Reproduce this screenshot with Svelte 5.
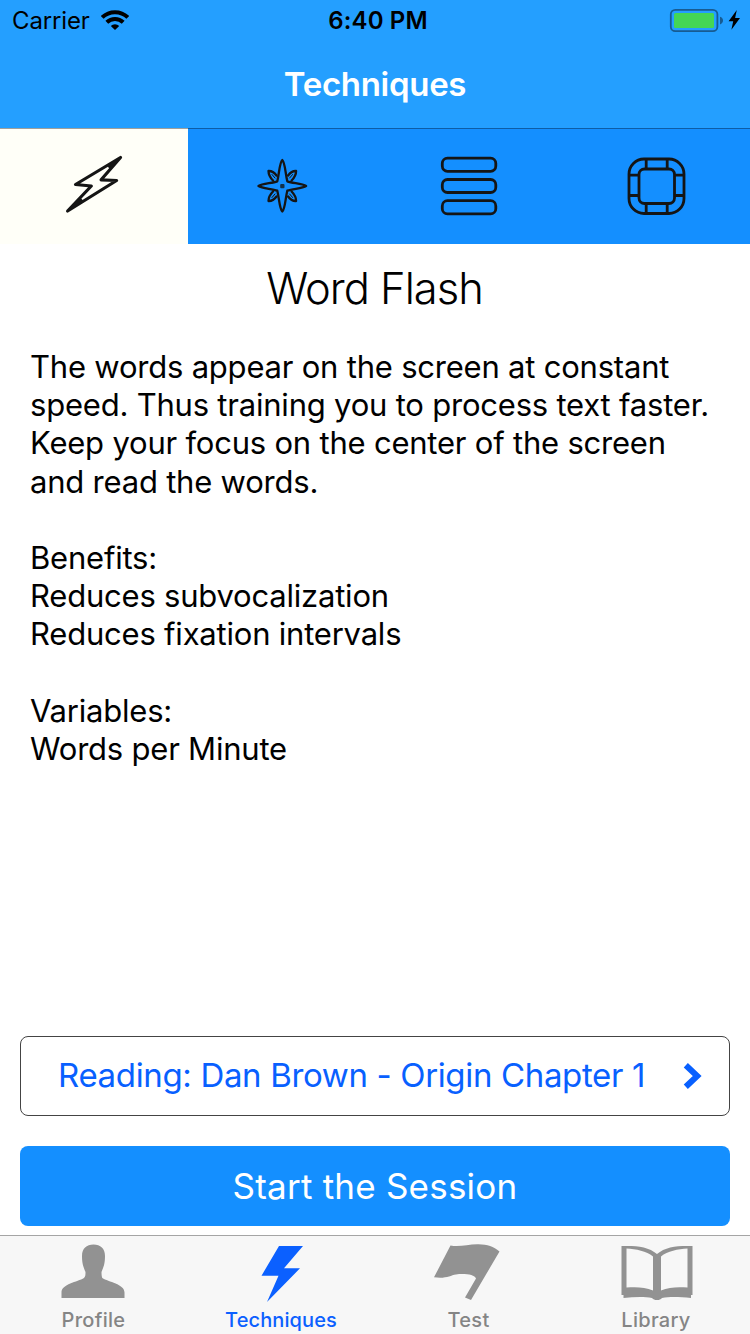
<script>
  const paragraphs = [
    [
      'The words appear on the screen at constant',
      'speed. Thus training you to process text faster.',
      'Keep your focus on the center of the screen',
      'and read the words.'
    ],
    ['Benefits:', 'Reduces subvocalization', 'Reduces fixation intervals'],
    ['Variables:', 'Words per Minute']
  ];
</script>

<div class="screen">
  <header>
    <div class="status">
      <div class="carrier">
        <span>Carrier</span>
        <svg width="28" height="20" viewBox="101 10 28 20">
          <g fill="none" stroke="#000" stroke-width="4">
            <path d="M102.2 17.4a18.3 18.3 0 0 1 25.6 0" />
            <path d="M106.8 22.2a11.8 11.8 0 0 1 16.4 0" />
          </g>
          <path d="M110.8 26a6 6 0 0 1 8.4 0L115 30z" />
        </svg>
      </div>
      <div class="clock">6:40 PM</div>
      <svg class="battery" width="72" height="26" viewBox="669 7 72 26">
        <rect x="670.8" y="9.8" width="46.6" height="21.4" rx="4.5" fill="none" stroke="#175b92" stroke-width="1.8" />
        <rect x="674" y="13" width="40" height="15" rx="1.5" fill="#44d655" />
        <path d="M720 16.8q3 1 3 3.8t-3 3.8z" fill="#175b92" />
        <path d="M736.8 10 728.600 21.300h4.600l-1.800 8.400 8.600-11.700h-4.900z" />
      </svg>
    </div>
    <h1>Techniques</h1>
  </header>

  <nav class="tabs">
    <button class="selected" aria-label="Word flash">
      <svg width="90" height="90" viewBox="49 140 90 90">
        <path d="M120.5 157.5 75.500 184.500l15.800 1.500-23.700 25 49-30.500-15.500-.7z" fill="none" stroke="#151515" stroke-width="3.200" stroke-linejoin="round" />
        <path d="M120.500 157.500 107 165l3 5zM67.600 211l12.500-13.500 3.500 3.500z" fill="#151515" />
      </svg>
    </button>
    <button aria-label="Focus star">
      <svg width="91" height="90" viewBox="236 140 91 90">
        <g fill="none" stroke="#151515" stroke-width="2.300" stroke-linejoin="round" stroke-linecap="round">
          <path d="M282.300 160c-2.800 2.500-3 13-5 21.300-5.500 2-15 2-18.800 4.700 3.800 2.500 13.300 2.700 18.800 4.700 2 8 2.200 18.300 5 20.800 2.800-2.500 3-12.800 5-20.800 5.500-2 15-2.200 18.800-4.700-3.800-2.700-13.300-2.700-18.800-4.700-2-8.300-2.200-18.800-5-21.300z" />
          <path d="M276.500 175.500q-3.500-4.800-8-4.500 0 5 4.500 9.500M288.100 175.500q3.500-4.800 8-4.500 0 5-4.500 9.500M276.500 196.500q-3.500 4.800-8 4.500 0-5 4.500-9.500M288.100 196.500q3.500 4.800 8 4.500 0-5-4.500-9.500" />
          <path d="M272 174.500l3 3.500M292.600 174.500l-3 3.500M272 197.500l3-3.500M292.600 197.500l-3-3.500" stroke-width="1" />
        </g>
        <rect x="280.200" y="183.900" width="4.300" height="4.300" rx="1" fill="#12304a" />
      </svg>
    </button>
    <button aria-label="Lines">
      <svg width="91" height="90" viewBox="423 140 91 90">
        <g fill="none" stroke="#151515" stroke-width="2.800">
          <rect x="442.300" y="158.100" width="53.500" height="13.200" rx="5.200" />
          <rect x="442.300" y="179.500" width="53.500" height="13" rx="5.200" />
          <rect x="442.300" y="200.700" width="53.500" height="13.200" rx="5.200" />
        </g>
      </svg>
    </button>
    <button aria-label="Frame">
      <svg width="90" height="90" viewBox="611 140 90 90">
        <g fill="none" stroke="#151515" stroke-width="2.800">
          <rect x="629" y="159" width="55" height="54.500" rx="15" />
          <rect x="639" y="169" width="35.500" height="34.500" rx="5.500" />
          <path d="M646.200 159v10M667.200 159v10M646.200 203.500v10M667.200 203.500v10M629 175.200h10M629 195.500h10M674.500 175.200H684M674.500 195.500H684" />
        </g>
      </svg>
    </button>
  </nav>

  <main>
    <h2>Word Flash</h2>
    <div class="description">
      {#each paragraphs as lines}
        <p>
          {#each lines as line}
            <span>{line}</span>
          {/each}
        </p>
      {/each}
    </div>
    <div class="actions">
      <button class="reading">
        <span>Reading: Dan Brown - Origin Chapter 1</span>
        <svg width="20" height="28" viewBox="683 1062 20 28">
          <path d="M685.800 1065.300 697.200 1076l-11.400 10.700" fill="none" stroke="#0860ff" stroke-width="6" />
        </svg>
      </button>
      <button class="start">Start the Session</button>
    </div>
  </main>

  <footer>
    <a class="item" href="#profile">
      <svg width="111" height="64" viewBox="38 1240 111 64">
        <path d="M93.500 1244.500c7 0 11.500 4 11.500 11.500 0 8-1.500 11-3.500 16 0 3 .3 5 .8 6 6 4 22.200 6 22.200 14.500V1298H61.500v-5.500c0-8.500 16-10.500 22.500-14.500 1.500-1.500 1.500-3.500 1.500-6-2-5-3.500-8-3.500-16 0-7.500 4.500-11.500 11.500-11.500z" fill="#929292" />
      </svg>
      <span>Profile</span>
    </a>
    <a class="item active" href="#techniques">
      <svg width="110" height="64" viewBox="226 1240 110 64">
        <path d="M279 1246H303l-19 22.300H300L267 1302l11.500-26.300H261.500z" fill="#0b60ff" />
      </svg>
      <span>Techniques</span>
    </a>
    <a class="item" href="#test">
      <svg width="111" height="64" viewBox="413 1240 111 64">
        <path d="M450.500 1245.500c9 2 18-1.500 28-1.200 9 .3 15 2.200 21 7.200L471 1300l-6-2.500 11-19c-1-4-12-5.200-20-4-6 1-10 4.500-22 2.800z" fill="#929292" />
      </svg>
      <span>Test</span>
    </a>
    <a class="item" href="#library">
      <svg width="110" height="64" viewBox="601 1240 110 64">
        <path d="M621.500 1246c14-.5 27 .5 35.500 8 8.500-7.500 21.500-8.500 35.500-8v49h-1.500v3c-11-1-21-1.500-29 0-1.500 1.500-2.500 2-5 2s-3.500-.5-5-2c-8-1.500-18-1-28.500 0v-3h-2zM626.500 1248.500v39c9.500-.8 18.500-.5 26.500 3v-34c-6.500-5.500-17-7.500-26.500-8zM687.500 1248.500c-9.500.5-20 2.500-26.500 8v34c8-3.500 17-3.800 26.500-3z" fill="#929292" fill-rule="evenodd" />
      </svg>
      <span>Library</span>
    </a>
  </footer>
</div>

<style>
  :global(body) { margin: 0; background: #fff; }
  .screen {
    width: 750px;
    height: 1334px;
    display: flex;
    flex-direction: column;
    overflow: hidden;
    background: #fff;
    color: #000;
    font-family: Inter, "Liberation Sans", sans-serif;
  }
  svg { display: block; flex: none; }
  button { border: 0; padding: 0; margin: 0; font: inherit; background: none; }
  header { height: 128px; background: #249fff; flex: none; }
  .status {
    height: 40px;
    display: grid;
    grid-template-columns: 1fr auto 1fr;
    align-items: center;
    padding: 0 9px 0 12px;
    font-size: 24px;
  }
  .carrier { display: flex; align-items: center; gap: 11px; letter-spacing: -0.15px; }
  .clock { font-weight: 600; letter-spacing: 0.15px; padding-left: 3px; }
  .battery { justify-self: end; }
  .status span, .clock { line-height: 38px; padding-top: 2px; }
  h1 {
    margin: 0;
    height: 88px;
    line-height: 89px;
    text-align: center;
    font-size: 33px;
    font-weight: 600;
    letter-spacing: -0.3px;
    color: #fff;
  }
  .tabs {
    display: grid;
    grid-template-columns: 188px 187px 187px 188px;
    height: 116px;
    flex: none;
    background: #148fff;
    box-shadow: inset 0 1px rgba(0, 0, 0, 0.35);
  }
  .tabs button { display: flex; justify-content: center; align-items: center; padding-bottom: 2px; }
  .tabs .selected { background: #fffff8; box-shadow: inset 0 1px #a0a09c; }
  main { flex: 1; display: flex; flex-direction: column; min-height: 0; }
  h2 {
    margin: 0;
    padding: 17px 1px 0 0;
    line-height: 54px;
    text-align: center;
    font-size: 43.500px;
    font-weight: 300;
    letter-spacing: -1px;
  }
  .description {
    display: flex;
    flex-direction: column;
    gap: 38.200px;
    padding: 33px 30px 0;
    font-size: 31px;
    letter-spacing: -0.21px;
    line-height: 38.200px;
    white-space: nowrap;
  }
  p { margin: 0; display: flex; flex-direction: column; align-items: flex-start; }
  .actions { margin-top: auto; padding: 0 20px 9px; display: flex; flex-direction: column; gap: 30px; }
  .actions button { height: 80px; box-sizing: border-box; border-radius: 8px; }
  .actions .reading {
    display: flex;
    align-items: center;
    justify-content: space-between;
    border: 1px solid #444;
    padding: 0 26px 0 37px;
    font-size: 33px;
    letter-spacing: -0.35px;
    color: #0860ff;
    white-space: nowrap;
  }
  .reading span { padding-bottom: 3px; }
  .actions .start { background: #148fff; color: #fff; font-size: 35px; letter-spacing: 0.22px; }
  footer {
    display: grid;
    grid-template-columns: 187px 188px 187px 188px;
    height: 99px;
    box-sizing: border-box;
    border-top: 1px solid #a5a5a5;
    background: #f7f7f7;
    flex: none;
  }
  .item {
    display: flex;
    flex-direction: column;
    align-items: center;
    padding-top: 4px;
    color: #858585;
    text-decoration: none;
    font-size: 20px;
    font-weight: 500;
    letter-spacing: 0.3px;
    line-height: 32px;
  }
  .active { color: #0b60ff; letter-spacing: 0.1px; }
</style>
